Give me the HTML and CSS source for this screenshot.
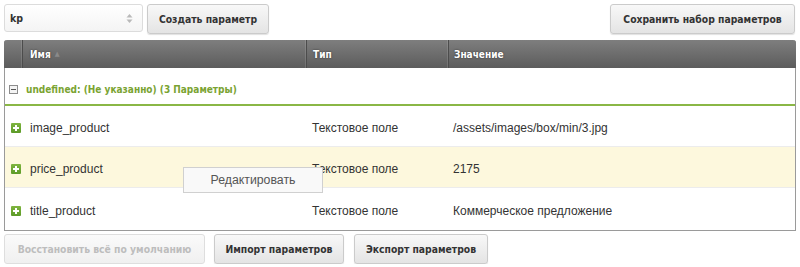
FILE: index.html
```html
<!DOCTYPE html>
<html lang="ru">
<head>
<meta charset="utf-8">
<link rel="stylesheet" href="styles.css">
</head>
<body>
<div class="page">
  <div class="toolbar">
    <div class="select">
      <span class="select-value">kp</span>
      <span class="spinner">
        <svg width="7" height="11" viewBox="0 0 7 11"><path d="M3.5 1 L6.5 4.5 H0.5 Z" fill="#b9b9b9"/><path d="M3.5 10 L6.5 6.5 H0.5 Z" fill="#b9b9b9"/></svg>
      </span>
    </div>
    <button class="btn btn-create">Создать параметр</button>
    <button class="btn btn-save">Сохранить набор параметров</button>
  </div>

  <div class="grid">
    <div class="grid-head">
      <div class="hcell hcell-icon"></div>
      <div class="hcell hcell-name">Имя <span class="sort">&#9650;</span></div>
      <div class="hcell hcell-type">Тип</div>
      <div class="hcell hcell-value">Значение</div>
    </div>
    <div class="group-row">
      <span class="minus"></span>
      <span class="group-title">undefined: (Не указанно) (3 Параметры)</span>
    </div>
    <div class="row">
      <div class="cell cell-icon"><span class="plus"></span></div>
      <div class="cell cell-name">image_product</div>
      <div class="cell cell-type">Текстовое поле</div>
      <div class="cell cell-value">/assets/images/box/min/3.jpg</div>
    </div>
    <div class="row row-hover">
      <div class="cell cell-icon"><span class="plus"></span></div>
      <div class="cell cell-name">price_product</div>
      <div class="cell cell-type">Текстовое поле</div>
      <div class="cell cell-value">2175</div>
    </div>
    <div class="row row-last">
      <div class="cell cell-icon"><span class="plus"></span></div>
      <div class="cell cell-name">title_product</div>
      <div class="cell cell-type">Текстовое поле</div>
      <div class="cell cell-value">Коммерческое предложение</div>
    </div>
    <div class="context-menu">Редактировать</div>
  </div>

  <div class="footer">
    <button class="btn btn-reset" disabled>Восстановить всё по умолчанию</button>
    <button class="btn btn-import">Импорт параметров</button>
    <button class="btn btn-export">Экспорт параметров</button>
  </div>
</div>
</body>
</html>
```

FILE: styles.css
```css
* { box-sizing: border-box; }
html, body { margin: 0; padding: 0; background: #fff; }
body { font-family: "Liberation Sans", Arial, sans-serif; font-size: 12px; color: #333; }

.page { padding: 4px 4px 0 4px; width: 800px; }

.toolbar { display: flex; align-items: flex-start; gap: 4px; height: 30px; }

.select {
  width: 139px; height: 28px;
  border: 1px solid #dcdcdc; border-radius: 3px;
  background: linear-gradient(#ffffff, #f4f4f4);
  display: flex; align-items: center; justify-content: space-between;
  padding: 0 9px 0 5px;
}
.select-value { font-family: "DejaVu Sans Condensed", "DejaVu Sans", sans-serif; font-weight: bold; font-size: 10.5px; color: #333; }
.spinner { display: flex; align-items: center; }

.btn {
  height: 30px; padding: 0 6px; white-space: nowrap;
  font-family: "DejaVu Sans Condensed", "DejaVu Sans", sans-serif;
  font-weight: bold; font-size: 10.3px; color: #333;
  border: 1px solid #cbcbcb; border-radius: 3px;
  background: linear-gradient(#f8f8f8, #e4e4e4);
  box-shadow: 0 1px 1px rgba(0,0,0,0.12);
  cursor: pointer;
}
.btn-create { width: 122px; }
.btn-save { width: 185px; margin-left: auto; margin-right: 1px; }
.btn-reset { width: 201px; color: #bdbdbd; background: linear-gradient(#fafafa, #f0f0f0); border-color: #dedede; box-shadow: none; }
.btn-import { width: 130px; }
.btn-export { width: 134px; margin-left: 1px; }

.grid {
  position: relative;
  margin-top: 6px; width: 792px;
  border: 1px solid #9a9a9a; border-top: 0;
  border-radius: 3px 3px 0 0;
}

.grid-head {
  display: flex; height: 28px;
  background: linear-gradient(#7e7e7e, #5c5c5c);
  border-radius: 3px 3px 0 0;
  margin: 0 -1px;
}
.hcell {
  display: flex; align-items: center; white-space: nowrap;
  color: #fff; font-family: "DejaVu Sans Condensed", "DejaVu Sans", sans-serif;
  font-weight: bold; font-size: 10px;
  text-shadow: 0 0 2px rgba(0,0,0,0.6);
  border-right: 1px solid #4c4c4c;
  box-shadow: inset -1px 0 0 rgba(255,255,255,0.12);
}
.hcell-icon { width: 19px; }
.hcell-name { width: 284px; padding-left: 7px; }
.hcell-type { width: 142px; padding-left: 6px; }
.hcell-value { flex: 1; padding-left: 5px; border-right: 0; box-shadow: none; }
.sort { font-size: 7px; color: #8a8a8a; text-shadow: none; margin-left: 4px; }

.group-row {
  height: 38px; display: flex; align-items: center;
  border-bottom: 2px solid #8ab746;
  padding: 6px 0 0 4px;
}
.minus {
  width: 9px; height: 9px; border: 1px solid #8c8c8c; background: #f4f4f4;
  position: relative; margin-right: 8px;
}
.minus::after {
  content: ""; position: absolute; left: 1px; right: 1px; top: 3px; height: 1px; background: #555;
}
.group-title {
  font-family: "DejaVu Sans Condensed", "DejaVu Sans", sans-serif;
  font-weight: bold; font-size: 10px; color: #7aa332; white-space: nowrap;
}

.row { display: flex; height: 41px; border-bottom: 1px solid #ececec; }
.row-hover { background: #fdf8dd; }
.row-last { border-bottom: 0; height: 42px; }
.cell { display: flex; align-items: center; color: #333; white-space: nowrap; padding-top: 3px; }
.cell-icon { width: 25px; padding-left: 6px; }
.cell-name { width: 282px; }
.cell-type { width: 141px; }
.cell-value { flex: 1; }

.plus {
  width: 10px; height: 10px; background: linear-gradient(#7fb53f, #5c9a28);
  border-radius: 1px; position: relative;
}
.plus::before { content: ""; position: absolute; left: 2px; top: 4px; width: 6px; height: 2px; background: #fff; }
.plus::after { content: ""; position: absolute; left: 4px; top: 2px; width: 2px; height: 6px; background: #fff; }

.context-menu {
  position: absolute; left: 178px; top: 127px;
  width: 140px; height: 26px;
  background: #f9f9f9; border: 1px solid #d0d0d0;
  display: flex; align-items: center; justify-content: center;
  font-size: 12.3px; color: #555;
}

.footer { display: flex; gap: 9px; margin-top: 3px; }
```
